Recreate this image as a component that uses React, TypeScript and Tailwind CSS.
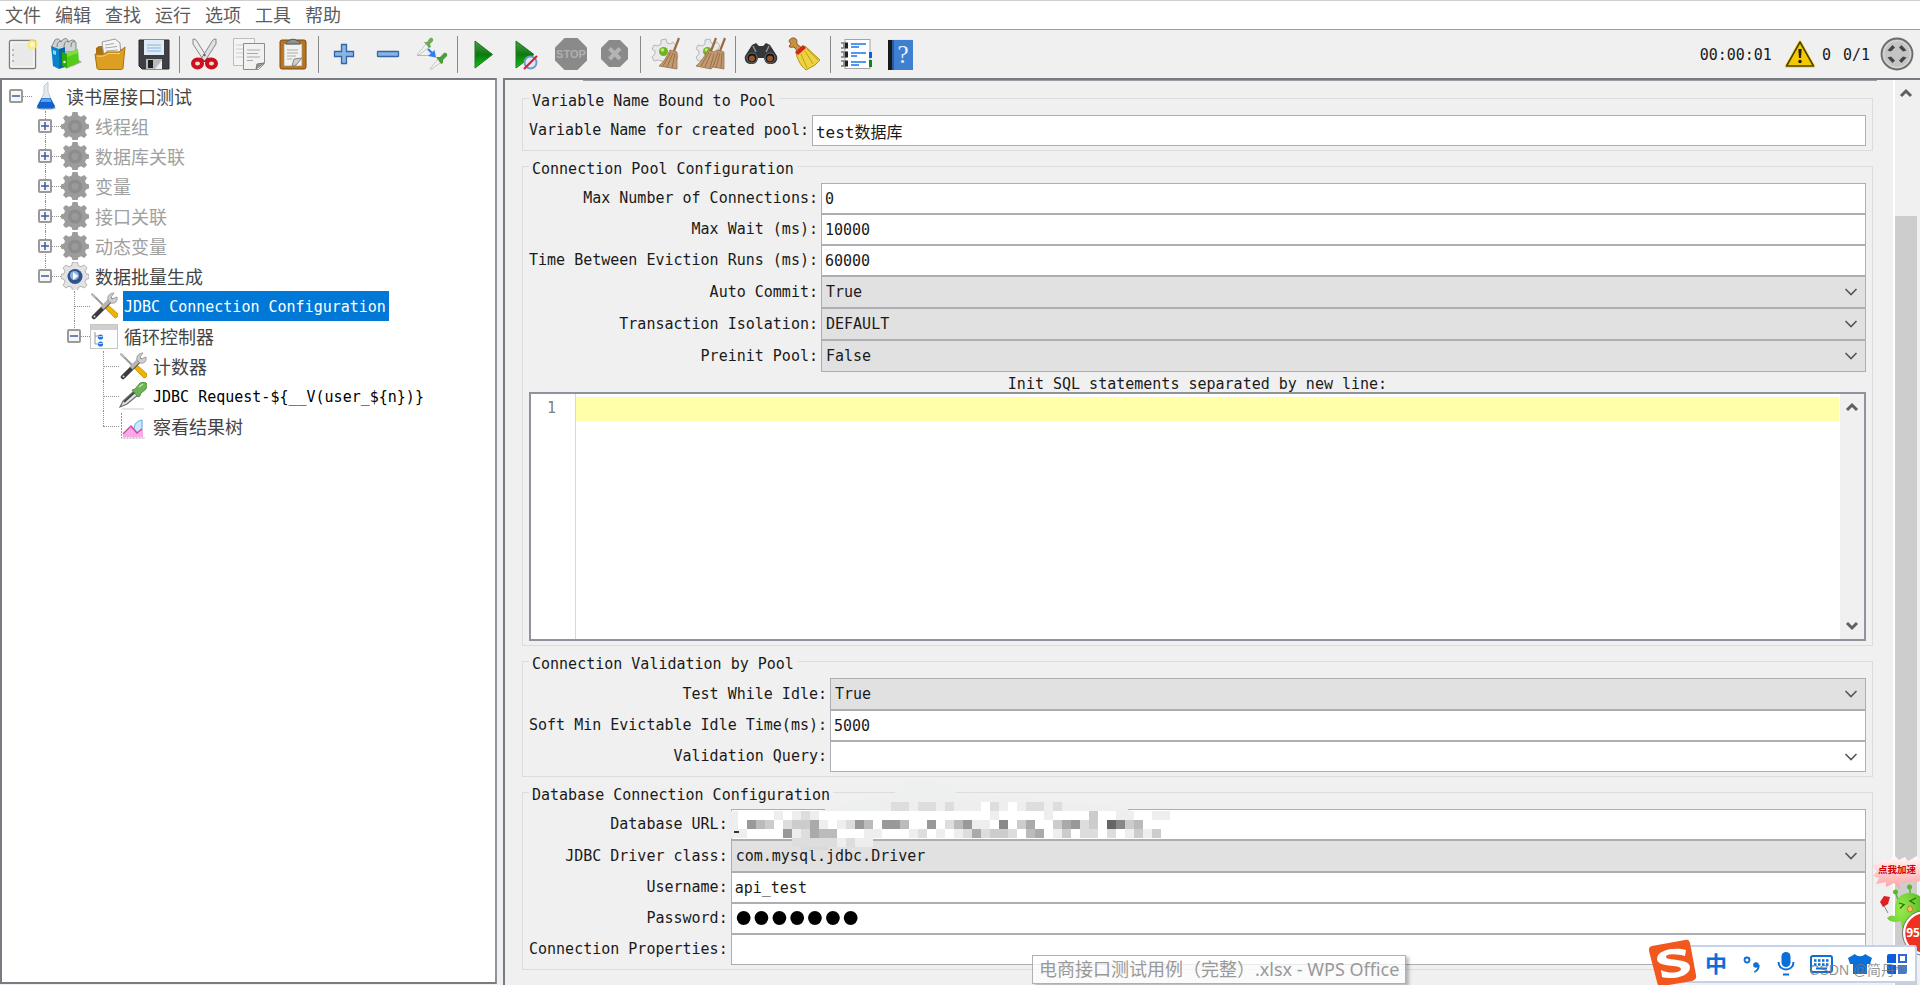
import React, { useState } from 'react';
import clsx from 'clsx';

type IconProps = { className?: string };
type IconType = React.FC<IconProps>;

/* ---------- Toolbar icons ---------- */

const NewIcon: IconType = () => (
  <svg width="34" height="34" viewBox="0 0 34 34">
    <rect x="4.5" y="3.5" width="26" height="28" rx="1.5" fill="#e9e9e9" stroke="#7d7d7d" strokeWidth="1.4" />
    <rect x="6" y="5" width="23" height="25" fill="none" stroke="#fff" />
    <path d="M7 13h2M7 18h2M7 24h2" stroke="#888" />
    <circle cx="27.5" cy="7.500" r="5" fill="#fbe96a" opacity=".8" />
    <circle cx="27.5" cy="7.500" r="2.5" fill="#fff8c0" />
  </svg>
);

const TemplatesIcon: IconType = () => (
  <svg width="34" height="34" viewBox="0 0 34 34">
    <path d="M22 30l11-5-5-3z" fill="#555" opacity=".5" />
    <path d="M3 9l3-6c3-2 5-1 5 2l4-3c3-1 4 0 4 3l4-2c3 0 4 2 4 4v8H5z" fill="#cfd3d3" stroke="#7d8686" />
    <path d="M8 10c0-5 3-7 5-5M15 10c0-5 3-7 5-5M22 10c0-5 2-6 4-5" fill="none" stroke="#6f8080" />
    <path d="M2 9l8 3v20l-6-3z" fill="#0a83c8" />
    <path d="M10 12l6-2v20l-6 2z" fill="#0567a8" />
    <path d="M4 13l3 1v4l-3-1z" fill="#8fd3f8" />
    <path d="M13 15l5 1.500v15l-5-3z" fill="#2ea70a" />
    <path d="M18 16.500L29 12l1 13-12 6.500z" fill="#53cc17" />
    <path d="M18 16.500L29 12v4l-11 4z" fill="#7be03c" />
    <circle cx="15.500" cy="25" r="1.300" fill="#d8ffc5" />
  </svg>
);

const OpenIcon: IconType = () => (
  <svg width="34" height="34" viewBox="0 0 34 34">
    <path d="M3 11l3-2h5l2 3h17v17H3z" fill="#a8730f" />
    <path d="M9 5l13-3 5 4 1 14H11z" fill="#f5f5f5" stroke="#9a9a9a" />
    <path d="M12 8l9-1.500M12 11l12-1.500M13 14l12-1" stroke="#a8a8a8" />
    <path d="M2 17c8 1 9 0 12-2h12l6-5-2 21c0 1-1 1.500-2 1.500H6c-1 0-2-.5-2-1.500z" fill="#dd9f22" stroke="#a8730f" />
    <path d="M4 19c7 1 9-1 11-2.500h12" fill="none" stroke="#f8d377" />
  </svg>
);

const SaveIcon: IconType = () => (
  <svg width="34" height="34" viewBox="0 0 34 34">
    <path d="M2 3h30v29H5l-3-3z" fill="#3d3f42" stroke="#26282a" />
    <rect x="7" y="3" width="20" height="15" fill="#dfecf8" />
    <path d="M10 8h14M10 11h14M10 14h14" stroke="#8ab2da" />
    <rect x="9" y="22" width="16" height="10" fill="#b8babc" />
    <rect x="11" y="23" width="5" height="8" fill="#222" />
    <path d="M18 32l7-9v9z" fill="#ededed" />
  </svg>
);

const CutIcon: IconType = () => (
  <svg width="34" height="34" viewBox="0 0 34 34">
    <path d="M5 2c3 0 4 2 5 4l10 16-4 2L5 7z" fill="#ececec" stroke="#868686" />
    <path d="M28 2c-3 0-4 2-5 4L13 22l4 2L28 7z" fill="#e0e0e0" stroke="#868686" />
    <circle cx="16.5" cy="18" r="1.200" fill="#666" />
    <path d="M10 21c3-1 5 0 6.500 3 1.500-3 3.500-4 6.500-3l-2 4h-9z" fill="#cc0f18" />
    <ellipse cx="9.500" cy="26.500" rx="4.500" ry="4" fill="#f6d9da" stroke="#cc0f18" strokeWidth="4" />
    <ellipse cx="23.500" cy="26.500" rx="4.500" ry="4" fill="#f6d9da" stroke="#cc0f18" strokeWidth="4" />
  </svg>
);

const CopyIcon: IconType = () => (
  <svg width="34" height="34" viewBox="0 0 34 34">
    <path d="M1.500 1.500h21v27h-21z" fill="#f4f4f4" stroke="#bdbdbd" />
    <path d="M4 8h12M4 12h8M4 16h8M4 20h8" stroke="#ccc" />
    <path d="M11.500 6.500h21v20l-6 6h-15z" fill="#f1f1f1" stroke="#8c8c8c" />
    <path d="M15 13h13M15 16.500h11M15 20h13M15 23.500h6" stroke="#a8a8a8" />
    <path d="M32 26l-7 1-1 5z" fill="#9b9b9b" stroke="#777" />
  </svg>
);

const PasteIcon: IconType = () => (
  <svg width="34" height="34" viewBox="0 0 34 34">
    <rect x="4" y="3" width="26" height="29" rx="2" fill="#b9741c" stroke="#7d4b0d" />
    <path d="M8 7h18v22H8z" fill="#f2f2f0" stroke="#999" strokeWidth=".7" />
    <path d="M10 7c0-3 3-3 4-4s5-1 6 0 4 1 4 4z" fill="#8e938c" stroke="#555951" />
    <path d="M11 13h11M11 16h11M11 19h9M11 22h5" stroke="#aaa" />
    <path d="M26 21l-8 1-2 7 4-1z" fill="#cfcfcf" stroke="#888" />
  </svg>
);

const PlusIcon: IconType = () => (
  <svg width="34" height="34" viewBox="0 0 34 34">
    <path d="M14.500 7.500h5v7h7v5h-7v7h-5v-7h-7v-5h7z" fill="#88b5e4" stroke="#3465a4" strokeWidth="1.300" />
  </svg>
);

const MinusIcon: IconType = () => (
  <svg width="34" height="34" viewBox="0 0 34 34">
    <rect x="6.500" y="14.500" width="21" height="5" rx=".5" fill="#88b5e4" stroke="#3465a4" strokeWidth="1.300" />
  </svg>
);

const ToggleIcon: IconType = () => (
  <svg width="34" height="34" viewBox="0 0 34 34">
    <path d="M2 18L11 7l3 3L4 18z" fill="#f4f4f4" stroke="#b5bdb0" strokeWidth=".8" />
    <path d="M2 18.500h15" stroke="#b9b9b9" />
    <path d="M9 5l3 0 3-4c2-1 4 1 3 3l-3 3 1 3-2 1z" fill="#70a85c" />
    <path d="M15 32l8-10 3 3-9 7z" fill="#f4f4f4" stroke="#b5bdb0" strokeWidth=".8" />
    <path d="M21 20l4 0 4-4c2-1 4 1 3 3l-4 4 0 3-2 1z" fill="#4f9c3c" />
    <path d="M13 12l5 5" stroke="#2f7fe8" strokeWidth="2.200" />
    <path d="M21 20.500l-8-1.500 6.500-6z" fill="#2f7fe8" />
  </svg>
);

const StartIcon: IconType = () => (
  <svg width="34" height="34" viewBox="0 0 34 34">
    <defs>
      <linearGradient id="start-green" x1="0" y1="0" x2="0" y2="1">
        <stop offset="0" stopColor="#4c9b4a" />
        <stop offset=".5" stopColor="#0d7a0f" />
        <stop offset="1" stopColor="#12c414" />
      </linearGradient>
    </defs>
    <path d="M9 4l17.500 13.500L9 31z" fill="url(#start-green)" stroke="#1c7a1e" />
  </svg>
);

const StartNoTimersIcon: IconType = () => (
  <svg width="34" height="34" viewBox="0 0 34 34">
    <path d="M6 4l18 13.500L6 31z" fill="url(#start-green)" stroke="#1c7a1e" />
    <circle cx="20.500" cy="25.500" r="6" fill="#dce9f8" stroke="#6f9ccd" strokeWidth="2" />
    <path d="M14 32l13-13" stroke="#d8202a" strokeWidth="2.200" />
  </svg>
);

const StopIcon: IconType = () => (
  <svg width="34" height="34" viewBox="0 0 34 34">
    <path d="M10.500 1h13L33 10.500v13L23.500 33h-13L1 23.500v-13z" fill="#8a8a8a" />
    <text x="17" y="21" textAnchor="middle" fontSize="11" fontWeight="700" fill="#b0b0b0" fontFamily="Liberation Sans, sans-serif">
      STOP
    </text>
  </svg>
);

const ShutdownIcon: IconType = () => (
  <svg width="34" height="34" viewBox="0 0 34 34">
    <path d="M11 3h11l8 8v11l-8 8H11l-8-8V11z" fill="#8a8a8a" />
    <path d="M11.500 11.500l10.500 10.500M22 11.500L11.500 22" stroke="#b4b4b4" strokeWidth="4" />
  </svg>
);

const GearBody = () => (
  <>
    <path
      d="M12 3l5-1 1 4 3 1 3-2 3 4-2 3v4l4 2-1 5-5 1-3 3-5 1-2-4-4-1-4 1-2-4 3-3v-3L3 12l2-4 4 1 3-2z"
      fill="#e9e9e9"
      stroke="#b7b7b7"
    />
    <circle cx="14.500" cy="14.500" r="4.500" fill="#6fb41f" />
    <circle cx="13.500" cy="13" r="1.800" fill="#bfe58b" />
  </>
);

const ClearIcon: IconType = () => (
  <svg width="34" height="34" viewBox="0 0 34 34">
    <GearBody />
    <path d="M30 1l-5 13" stroke="#9a6b42" strokeWidth="2.200" />
    <path d="M21 13l7 2 0 17-18-3c5-4 8-10 11-16z" fill="#c39a6f" stroke="#8c6540" strokeWidth=".7" />
    <path d="M22 15l-8 14M24 16l-6 14M26 16l-3 15" stroke="#8c6540" strokeWidth=".8" />
  </svg>
);

const ClearAllIcon: IconType = () => (
  <svg width="34" height="34" viewBox="0 0 34 34">
    <GearBody />
    <path d="M23 1l-5 13M32 1l-5 13" stroke="#9a6b42" strokeWidth="2.200" />
    <path d="M15 13l6 2 3-2 7 2v17l-11-2-2 2-15-3c5-4 9-10 12-16z" fill="#c39a6f" stroke="#8c6540" strokeWidth=".7" />
    <path d="M16 15L8 29M18 16l-6 14M21 17l-4 14M25 15l-5 15M27 16l-4 15M29 16l-1 15" stroke="#8c6540" strokeWidth=".8" />
  </svg>
);

const SearchIcon: IconType = () => (
  <svg width="34" height="34" viewBox="0 0 34 34">
    <path d="M8 8l4-2 3 3h4l3-3 4 2 7 11c1 4-1 8-6 8s-6-2-7-6h-6c-1 4-2 6-7 6s-7-4-6-8z" fill="#34373a" />
    <path d="M9 9l3 6M25 9l-3 6" stroke="#8d9296" strokeWidth="1.500" />
    <circle cx="8" cy="21" r="5" fill="#111" stroke="#6e7173" />
    <circle cx="26" cy="21" r="5" fill="#111" stroke="#6e7173" />
    <circle cx="8" cy="21.500" r="3" fill="#9a5423" />
    <circle cx="26" cy="21.500" r="3" fill="#9a5423" />
  </svg>
);

const ResetSearchIcon: IconType = () => (
  <svg width="34" height="34" viewBox="0 0 34 34">
    <path d="M1 4c1-3 5-4 7-2s0 4 1 5l6 5-4 4-5-6c-2 0-5 1-5-1l2-2z" fill="#c98f45" stroke="#8a5a1c" />
    <path d="M8 16l9-7 15 14-5 5-9 5c-5-4-8-9-10-17z" fill="#ecd33f" stroke="#b29312" />
    <path d="M13 17l6 14M17 14l8 13M19 12l11 11" stroke="#b29312" strokeWidth=".8" />
    <path d="M7 15l8-7 3 3-8 7z" fill="#d4251b" />
  </svg>
);

const FunctionIcon: IconType = () => (
  <svg width="34" height="34" viewBox="0 0 34 34">
    <rect x="6" y="2.500" width="25" height="29" fill="#fff" stroke="#a4a4a4" />
    <path d="M30 15h3v6h-3z" fill="#0b63dc" />
    <path d="M30 23h3v7h-3z" fill="#0d8a16" />
    <path d="M12 7h15M12 10h8M12 16h15M12 19h6M12 25h15M12 28h8" stroke="#1a76ec" strokeWidth="1.500" />
    <path d="M2 6h3v5H2M2 15h3v5H2M2 24h3v5H2" fill="none" stroke="#777" strokeWidth="1.500" />
    <path d="M6 5.500h3v6H6zM6 14.500h3v6H6zM6 23.500h3v6H6z" fill="#222" />
  </svg>
);

const HelpIcon: IconType = () => (
  <svg width="34" height="34" viewBox="0 0 34 34">
    <path d="M5 3h25v30H5z" fill="#3f7fd0" />
    <path d="M5 3h4v30H5z" fill="#17191c" />
    <path d="M9 3h2v30H9z" fill="#2a5c9f" />
    <path d="M6 2.500h24" stroke="#dfe7ef" />
    <text x="20" y="26" textAnchor="middle" fontSize="25" fill="#e6f1ff" fontFamily="Liberation Serif, serif">
      ?
    </text>
  </svg>
);

const WarningIcon: IconType = () => (
  <svg width="32" height="30" viewBox="0 0 32 30">
    <path d="M16 2.500L30 27.500H2z" fill="#f5c800" stroke="#f7e06a" strokeWidth="3" strokeLinejoin="round" />
    <path d="M16 3L29.500 27h-27z" fill="#f5c800" stroke="#4d4300" strokeWidth="1.600" strokeLinejoin="round" />
    <path d="M14.300 10h3.400l-.7 9h-2z" fill="#222" />
    <circle cx="16" cy="22.500" r="1.800" fill="#222" />
  </svg>
);

const RemoteStatusIcon: IconType = () => (
  <svg width="34" height="34" viewBox="0 0 34 34">
    <circle cx="17" cy="17" r="15.500" fill="#b9b9b9" stroke="#6c6c6c" strokeWidth="1.800" />
    <circle cx="17" cy="17" r="13.500" fill="#c4c4c4" stroke="#dedede" />
    <path d="M7.500 13.500l5-5.500 2.500 2.500-4 4zM26.500 13.500l-5-5.500-2.500 2.500 4 4zM7.500 20.500l5 5.500 2.500-2.500-4-4zM26.500 20.500l-5 5.500-2.500-2.500 4-4z" fill="#454545" />
  </svg>
);

/* ---------- Tree icons ---------- */

const FlaskIcon: IconType = () => (
  <svg width="28" height="28" viewBox="0 0 28 28">
    <ellipse cx="14" cy="26" rx="10" ry="1.800" fill="#bbb" />
    <path d="M12 4l4-4v10l6 14c0 2-1 2-2 2H8c-2 0-2-1-2-2l6-13z" fill="#e4e9f0" stroke="#b5bcc6" strokeWidth=".8" />
    <path d="M9.500 16h9l4.500 8c0 2-2 2.500-3 2.500H8c-1 0-3-.5-3-2.500z" fill="#0d63cf" />
    <path d="M10 16.500h8l1.500 3.500H8.500z" fill="#5aa2ee" />
  </svg>
);

const gearPath =
  'M11.500 0h5l.8 3.600 2.700 1.100L23.200 3 26 5.900l-2 3 1 2.700 3 .9v4l-3 .9-1 2.700 2 3-2.800 2.900-3.200-1.700-2.700 1.100-.8 3.100h-5l-.8-3.100L8 24.300 4.800 26 2 23.100l2-3-1-2.700-3-.9v-4l3-.9 1-2.700-2-3L4.800 3 8 4.700l2.700-1.100z';

const DisabledGearIcon: IconType = () => (
  <svg width="28" height="28" viewBox="0 0 28 28">
    <path d={gearPath} fill="#9c9c9c" />
    <circle cx="14" cy="14.500" r="7" fill="#8d8d8d" />
    <circle cx="14" cy="14.500" r="3.500" fill="#9a9a9a" />
  </svg>
);

const GearIcon: IconType = () => (
  <svg width="28" height="28" viewBox="0 0 28 28">
    <path d={gearPath} fill="#e3e3e3" stroke="#a3a3a3" strokeWidth=".8" />
    <circle cx="14" cy="14.500" r="7.500" fill="#31538c" />
    <circle cx="13.500" cy="13.500" r="4.500" fill="#8fb1e0" />
    <path d="M12 10l5 4-5 4z" fill="#fff" />
  </svg>
);

const ToolsIcon: IconType = () => (
  <svg width="28" height="28" viewBox="0 0 28 28">
    <path d="M2 2l14 14" stroke="#9a9a9a" strokeWidth="2" />
    <path d="M1 1l3 1 2 3-2 1-3-3z" fill="#bdbdbd" />
    <path d="M15 16l3-3 10 9c0 3-2 4-3 4z" fill="#f0b400" stroke="#c48a00" strokeWidth=".8" />
    <path d="M4 25L21 8" stroke="#3b3b3b" strokeWidth="4.500" strokeLinecap="round" />
    <path d="M12 16l9-9" stroke="#b5b5b5" strokeWidth="4" />
    <path d="M18 8c-1-4 2-7 6-7l-3 4 1 2 5-2c1 4-2 7-6 6z" fill="#cfcfcf" stroke="#8c8c8c" strokeWidth=".8" />
    <circle cx="4.500" cy="24.500" r="1" fill="#ddd" />
  </svg>
);

const LoopIcon: IconType = () => (
  <svg width="28" height="28" viewBox="0 0 28 28">
    <rect x=".5" y="2.500" width="27" height="24" fill="#fcfcfc" stroke="#c5c5c5" />
    <path d="M1 3h26v5H1z" fill="#cfcfcf" />
    <path d="M5 10v12h4M5 14h4" fill="none" stroke="#999" />
    <circle cx="10.500" cy="15" r="2.600" fill="#2077dd" />
    <circle cx="10.500" cy="22" r="2.600" fill="#2077dd" />
    <path d="M8.500 14.500h4M8.500 21.500h4" stroke="#b9dcff" />
  </svg>
);

const SamplerIcon: IconType = () => (
  <svg width="28" height="28" viewBox="0 0 28 28">
    <path d="M3 27h22" stroke="#ddd" strokeWidth="1.500" />
    <path d="M1 25l3-6 11-10 4 4L8 22z" fill="#dfe3e3" stroke="#6a6e6e" strokeWidth="1.200" />
    <path d="M5 20L16 10" stroke="#444" strokeWidth="1.800" />
    <path d="M13 8l3-1 5-6c3-1 6-1 7 1s0 4-2 6l-4 3-1 3-2 1z" fill="#6db455" stroke="#47823a" strokeWidth=".8" />
    <path d="M20 5l4-3" stroke="#c2eab0" strokeWidth="1.500" />
  </svg>
);

const ListenerIcon: IconType = () => (
  <svg width="28" height="28" viewBox="0 0 28 28">
    <path d="M2.500 1v25H26" fill="none" stroke="#999" strokeDasharray="2 1" />
    <path d="M15 17c0-5 3-8 8-9v14l-8 3z" fill="#cfe6fb" stroke="#55a5f0" />
    <path d="M4 23l5-5 4-4 4 5 3 2 4-4v8H4z" fill="#f9a8e8" />
    <path d="M4 22l8-8 6 7 5-4" fill="none" stroke="#d64596" strokeWidth="1.500" />
  </svg>
);

/* ---------- Small shared pieces ---------- */

const Chevron = ({ up = false }: { up?: boolean }) => (
  <svg width="14" height="10" viewBox="0 0 14 10" className={clsx(up && 'rotate-180')}>
    <path d="M2 2l5 5 5-5" fill="none" stroke="#606060" strokeWidth="3" />
  </svg>
);

const ThinChevron = () => (
  <svg width="14" height="10" viewBox="0 0 14 10">
    <path d="M1.500 2l5.500 5.500L12.500 2" fill="none" stroke="#555" strokeWidth="1.600" />
  </svg>
);

const toolbarGroups: { name: string; icon: IconType }[][] = [
  [
    { name: 'New', icon: NewIcon },
    { name: 'Templates', icon: TemplatesIcon },
    { name: 'Open', icon: OpenIcon },
    { name: 'Save', icon: SaveIcon },
  ],
  [
    { name: 'Cut', icon: CutIcon },
    { name: 'Copy', icon: CopyIcon },
    { name: 'Paste', icon: PasteIcon },
  ],
  [
    { name: 'Expand All', icon: PlusIcon },
    { name: 'Collapse All', icon: MinusIcon },
    { name: 'Toggle', icon: ToggleIcon },
  ],
  [
    { name: 'Start', icon: StartIcon },
    { name: 'Start no pauses', icon: StartNoTimersIcon },
    { name: 'Stop', icon: StopIcon },
    { name: 'Shutdown', icon: ShutdownIcon },
  ],
  [
    { name: 'Clear', icon: ClearIcon },
    { name: 'Clear All', icon: ClearAllIcon },
  ],
  [
    { name: 'Search', icon: SearchIcon },
    { name: 'Reset Search', icon: ResetSearchIcon },
  ],
  [
    { name: 'Function Helper', icon: FunctionIcon },
    { name: 'Help', icon: HelpIcon },
  ],
];

const menus = ['文件', '编辑', '查找', '运行', '选项', '工具', '帮助'];

const MenuBar = () => (
  <nav className="flex h-[30px] items-center gap-[14px] border-t border-b border-t-[#cfcfcf] border-b-[#a0a0a0] bg-white pb-[3px] pl-[5px] font-['Noto_Sans_CJK_SC',sans-serif] text-lg leading-none text-[#5c5c5c]">
    {menus.map((menu) => (
      <button key={menu} type="button">
        {menu}
      </button>
    ))}
  </nav>
);

const Toolbar = () => (
  <div className="flex h-12 items-center">
    {toolbarGroups.map((group, i) => (
      <React.Fragment key={i}>
        {i > 0 && (
          <div className="flex w-[7px] justify-center">
            <div className="h-[37px] w-px bg-[#8a8a8a]" />
          </div>
        )}
        {group.map(({ name, icon: Icon }) => (
          <button key={name} type="button" aria-label={name} className="flex w-11 justify-center">
            <Icon />
          </button>
        ))}
      </React.Fragment>
    ))}
    <div className="ml-auto flex items-center pr-[6px]">
      <span className="pt-[2px]">00:00:01</span>
      <button type="button" aria-label="Log errors" className="mr-[6px] ml-3">
        <WarningIcon />
      </button>
      <span className="mr-3 pt-[2px]">0</span>
      <span className="mr-[10px] pt-[2px]">0/1</span>
      <RemoteStatusIcon />
    </div>
  </div>
);

/* ---------- Test plan tree ---------- */

interface TreeItem {
  label: string;
  depth: number;
  icon: IconType;
  toggle?: 'plus' | 'minus';
  last?: boolean;
  disabled?: boolean;
}

const treeItems: TreeItem[] = [
  { label: '读书屋接口测试', depth: 0, icon: FlaskIcon, toggle: 'minus' },
  { label: '线程组', depth: 1, icon: DisabledGearIcon, toggle: 'plus', disabled: true },
  { label: '数据库关联', depth: 1, icon: DisabledGearIcon, toggle: 'plus', disabled: true },
  { label: '变量', depth: 1, icon: DisabledGearIcon, toggle: 'plus', disabled: true },
  { label: '接口关联', depth: 1, icon: DisabledGearIcon, toggle: 'plus', disabled: true },
  { label: '动态变量', depth: 1, icon: DisabledGearIcon, toggle: 'plus', disabled: true },
  { label: '数据批量生成', depth: 1, icon: GearIcon, toggle: 'minus', last: true },
  { label: 'JDBC Connection Configuration', depth: 2, icon: ToolsIcon },
  { label: '循环控制器', depth: 2, icon: LoopIcon, toggle: 'minus', last: true },
  { label: '计数器', depth: 3, icon: ToolsIcon },
  { label: 'JDBC Request-${__V(user_${n})}', depth: 3, icon: SamplerIcon },
  { label: '察看结果树', depth: 3, icon: ListenerIcon, last: true },
];

const TreeRow = ({ item, selected, onSelect }: { item: TreeItem; selected: boolean; onSelect: () => void }) => {
  const { label, depth, icon: Icon, toggle, last, disabled } = item;
  const latin = /^[\x20-\x7e]+$/.test(label);

  return (
    <li className="flex h-[30px] items-center">
      {Array.from({ length: depth }, (_, i) => (
        <span key={i} className="w-[29px]" />
      ))}
      <span className="relative flex h-full w-[29px] items-center pl-[6px]">
        {depth > 0 && (
          <span
            className={clsx('absolute top-0 left-[13px] border-l border-dotted border-[#8f8f8f]', last ? 'h-1/2' : 'h-full')}
          />
        )}
        <span className="absolute top-1/2 right-0 left-[13px] border-t border-dotted border-[#8f8f8f]" />
        {toggle && (
          <button
            type="button"
            aria-label={toggle === 'plus' ? 'Expand' : 'Collapse'}
            className="relative flex size-[14px] items-center justify-center rounded-[2px] border-2 border-[#9a9a9a] bg-[#f6f6f6]"
          >
            <svg width="8" height="8" viewBox="0 0 8 8">
              <path d={toggle === 'plus' ? 'M0 4h8M4 0v8' : 'M0 4h8'} stroke="#3b5ba5" strokeWidth="1.500" />
            </svg>
          </button>
        )}
      </span>
      <Icon />
      <button
        type="button"
        onClick={onSelect}
        className={clsx(
          'ml-[5px] flex h-full items-center pl-px whitespace-nowrap',
          latin ? 'pt-[2px] pr-[3px] text-[15px]' : "pb-px font-['Noto_Sans_CJK_SC',sans-serif] text-lg leading-none",
          selected ? 'bg-[#0078d7] text-white' : disabled ? 'text-[#a0a0a0]' : latin ? 'text-black' : 'text-[#444]',
        )}
      >
        {label}
      </button>
    </li>
  );
};

const TestPlanTree = () => {
  const [selected, setSelected] = useState('JDBC Connection Configuration');

  return (
    <aside className="mb-px w-[497px] shrink-0 border-2 border-[#777b82] border-r-[#8f939b] bg-white pt-px pl-px">
      <ul>
        {treeItems.map((item) => (
          <TreeRow
            key={item.label}
            item={item}
            selected={selected === item.label}
            onSelect={() => setSelected(item.label)}
          />
        ))}
      </ul>
    </aside>
  );
};

/* ---------- Form ---------- */

const Section = ({ title, children }: { title: string; children: React.ReactNode }) => (
  <fieldset className="mb-[2px] border border-[#dcdcdc] px-[6px] pb-1">
    <legend className="px-[3px] pt-[6px] leading-5">{title}</legend>
    <div className="pt-1">{children}</div>
  </fieldset>
);

const FormGrid = ({ children }: { children: React.ReactNode }) => (
  <div className="grid grid-cols-[auto_1fr] items-center">{children}</div>
);

interface FieldProps {
  id: string;
  label: string;
  value?: string;
  type?: string;
  className?: string;
}

const FieldLabel = ({ id, label }: { id: string; label: string }) => (
  <label htmlFor={id} className="pr-[3px] text-right whitespace-nowrap">
    {label}
  </label>
);

const TextField = ({ id, label, value = '', type = 'text', className }: FieldProps) => (
  <>
    <FieldLabel id={id} label={label} />
    <input
      id={id}
      type={type}
      defaultValue={value}
      className={clsx('h-[31px] w-full min-w-0 border border-[#adadb5] bg-white pl-[3px] outline-none', className)}
    />
  </>
);

const SelectField = ({ id, label, value }: FieldProps) => (
  <>
    <FieldLabel id={id} label={label} />
    <div className="relative flex h-8 items-center">
      <select
        id={id}
        defaultValue={value}
        className="size-full appearance-none border border-[#adadb5] bg-[#e1e1e1] pl-1 outline-none"
      >
        <option>{value}</option>
      </select>
      <span className="pointer-events-none absolute right-2">
        <ThinChevron />
      </span>
    </div>
  </>
);

const ComboField = ({ id, label }: FieldProps) => (
  <>
    <FieldLabel id={id} label={label} />
    <div className="flex h-[31px] items-center border border-[#adadb5] bg-white pr-[7px]">
      <input id={id} type="text" className="h-full min-w-0 flex-1 pl-[3px] outline-none" />
      <button type="button" aria-label="Show options">
        <ThinChevron />
      </button>
    </div>
  </>
);

// Grey level of each 9px block, one hex digit per block; a dot leaves the block clear
const mosaicRows = [
  '.................eddeddedeeefdefeddede............',
  'effffefedefffffffffffffffffffefffffeffffcffeeffee.',
  'ef9bcfdccaefed9bf99bff9fdb9eef8fcaffca9dcf68cbfff.',
  'eeffff9edabbfffeefffedfefedadccdfbafecfddfdfececff',
  '.......dddddedee..................................',
];

const MaskedUrl = () => (
  <svg
    width="450"
    height="54"
    viewBox="0 0 450 54"
    className="pointer-events-none absolute bottom-[-16px] left-[-2px] overflow-visible"
    shapeRendering="crispEdges"
  >
    <path d="M90 9L128 -1L150 -6L178 -12L180 -20q8 -8 18 0L222 -14v4L330 0L392 4L402 9z" fill="#eeefef" />
    {mosaicRows.map((row, y) =>
      [...row].map((c, x) =>
        c === '.' ? null : (
          <rect key={`${x}-${y}`} x={x * 9} y={y * 9} width="9" height="9" fill={`#${c}${c}${c}`} />
        ),
      ),
    )}
    <rect x="72" y="45" width="27" height="3" fill="#dadada" />
    <rect x="5" y="29" width="5" height="2" fill="#333" />
  </svg>
);

const SqlEditor = () => (
  <div className="flex h-[249px] border-2 border-[#8f939b] bg-white">
    <div className="w-[45px] border-r border-[#d8d8d8] pt-[2px] pr-[19px] text-right leading-6 text-[#808080]">1</div>
    <div className="flex-1 pt-[3px]">
      <textarea
        id="init-sql"
        rows={1}
        spellCheck={false}
        className="block h-6 w-full resize-none overflow-hidden bg-[#ffffaa] leading-6 outline-none"
      />
    </div>
    <div className="ml-px flex w-6 flex-col items-center justify-between bg-[#f0f0f0] py-2">
      <Chevron up />
      <Chevron />
    </div>
  </div>
);

const ConnectionForm = () => (
  <form className="min-w-0 flex-1 pr-5 pl-[17px]">
    <div className="mr-[-4px] mb-1 ml-[61px] h-px bg-[#9b9da5]" />

    <Section title="Variable Name Bound to Pool">
      <FormGrid>
        <TextField id="pool-name" label="Variable Name for created pool:" value="test数据库" className="text-base" />
      </FormGrid>
    </Section>

    <Section title="Connection Pool Configuration">
      <FormGrid>
        <TextField id="max-connections" label="Max Number of Connections:" value="0" />
        <TextField id="max-wait" label="Max Wait (ms):" value="10000" />
        <TextField id="eviction-runs" label="Time Between Eviction Runs (ms):" value="60000" />
        <SelectField id="auto-commit" label="Auto Commit:" value="True" />
        <SelectField id="isolation" label="Transaction Isolation:" value="DEFAULT" />
        <SelectField id="preinit" label="Preinit Pool:" value="False" />
      </FormGrid>
      <label htmlFor="init-sql" className="block h-5 text-center leading-6">
        Init SQL statements separated by new line:
      </label>
      <SqlEditor />
    </Section>

    <Section title="Connection Validation by Pool">
      <FormGrid>
        <SelectField id="test-idle" label="Test While Idle:" value="True" />
        <TextField id="idle-time" label="Soft Min Evictable Idle Time(ms):" value="5000" />
        <ComboField id="validation-query" label="Validation Query:" />
      </FormGrid>
    </Section>

    <Section title="Database Connection Configuration">
      <FormGrid>
        <FieldLabel id="db-url" label="Database URL:" />
        <div className="relative z-10 h-[31px]">
          <input id="db-url" type="text" className="size-full border border-[#adadb5] bg-white pl-[3px] outline-none" />
          <MaskedUrl />
        </div>
        <SelectField id="driver" label="JDBC Driver class:" value="com.mysql.jdbc.Driver" />
        <TextField id="username" label="Username:" value="api_test" />
        <TextField
          id="password"
          label="Password:"
          value="testapi"
          type="password"
          className="font-['Liberation_Sans',sans-serif] text-[51px] text-black"
        />
        <TextField id="properties" label="Connection Properties:" />
      </FormGrid>
    </Section>
  </form>
);

const PageScrollbar = () => (
  <div className="flex w-6 shrink-0 flex-col items-center border-l-2 border-white bg-[#f0f0f0] pt-2">
    <Chevron up />
    <div className="mt-[118px] w-full flex-1 bg-[#cdcdcd]" />
  </div>
);

/* ---------- Desktop overlays ---------- */

const TaskTooltip = () => (
  <div className="absolute bottom-px left-[1032px] border border-[#b0b0b0] bg-white/75 px-[6px] font-['Noto_Sans','Noto_Sans_CJK_SC',sans-serif] text-lg leading-[27px] whitespace-nowrap text-[#999] shadow-[3px_2px_3px_rgba(0,0,0,0.25)]">
    电商接口测试用例（完整）.xlsx - WPS Office
  </div>
);

const Mascot = () => (
  <div className="absolute right-0 bottom-1 h-[128px] w-[49px] overflow-hidden">
    <svg width="49" height="128" viewBox="0 0 49 128">
      <defs>
        <linearGradient id="burst" x1="0" y1="0" x2="0" y2="1">
          <stop offset="0" stopColor="#fff" />
          <stop offset="1" stopColor="#ff9e9e" />
        </linearGradient>
        <radialGradient id="alien" cx=".4" cy=".3" r=".8">
          <stop offset="0" stopColor="#97ea4c" />
          <stop offset="1" stopColor="#47b517" />
        </radialGradient>
      </defs>
      <path
        d="M2 10l8 1 1-5 7 2 5-6 5 5 6-3 3 4 9-5 4 6v18l-6 3-5-2-6 2-5-1 1 7-6-6-8 4 0-5-10 2 3-6-6-2 4-5-4-4z"
        fill="url(#burst)"
      />
      <path d="M27 47l-2-6M39 42v-8" stroke="#5bb52d" strokeWidth="1.500" />
      <circle cx="24.500" cy="39" r="2.500" fill="#56ba22" />
      <circle cx="38.500" cy="34" r="2.500" fill="#56ba22" />
      <path
        d="M24 60c-1-12 4-20 15-20 5 0 9 2 12 5v50c-12-2-20-12-21-27-5 2-12 1-14-3 3-3 6-3 8-2z"
        fill="url(#alien)"
      />
      <path d="M28 50l5 1.500-4 4M45 45l-6 3 5 3" fill="none" stroke="#2c6c12" strokeWidth="1.300" />
      <ellipse cx="39" cy="56" rx="2.500" ry="3" fill="#f9c06a" stroke="#c98122" />
      <path d="M17 60l-5-9" stroke="#888" />
      <path d="M9 49l4-6 6 1-2 7-5 3z" fill="#e02020" />
      <circle cx="54" cy="80" r="21" fill="#f03020" stroke="#fff" strokeWidth="2.500" />
      <circle cx="54" cy="80" r="22.500" fill="none" stroke="#777" strokeWidth="1" />
      <text x="26" y="20" textAnchor="middle" fontSize="9.500" fontWeight="700" fill="#d00000" fontFamily="Noto Sans CJK SC, sans-serif">
        点我加速
      </text>
      <text x="42" y="84" textAnchor="middle" fontSize="12" fontWeight="700" fill="#fff" fontFamily="Open Sans, sans-serif">
        95
      </text>
    </svg>
  </div>
);

const InputMethodBar = () => (
  <div className="absolute right-[3px] bottom-[2px] flex h-[38px] w-[250px] items-center rounded-[3px] border-2 border-[#c3d2e8] bg-white pl-9">
    <svg width="50" height="48" viewBox="0 0 50 48" className="absolute -top-2 left-[-22px]">
      <path d="M5 7L38 1c3-1 4 0 5 3l6 32c1 3-1 5-4 6l-29 5c-4 1-5 0-6-4L2 12c0-3 0-4 3-5z" fill="#f2571e" />
      <path
        d="M39 11c-9-3-29-1-29 9 0 9 24 5 24 10 0 4-12 5-20 1l1 7c10 3 28 0 28-10 0-9-24-6-24-10 0-4 12-3 19-1z"
        fill="#fff"
      />
    </svg>
    <div className="flex flex-1 items-center justify-between pr-2 text-[#0a6fd8]">
      <button type="button" className="pb-1 font-['Noto_Sans_CJK_SC',sans-serif] text-[22px] leading-none font-bold">
        中
      </button>
      <svg width="20" height="22" viewBox="0 0 20 22">
        <circle cx="5" cy="7" r="2.500" fill="none" stroke="#0a6fd8" strokeWidth="1.800" />
        <circle cx="14" cy="12" r="2.800" fill="#0a6fd8" />
        <path d="M16.800 12c0 4-2 6-4.500 7" fill="none" stroke="#0a6fd8" strokeWidth="1.800" />
      </svg>
      <svg width="18" height="24" viewBox="0 0 18 24">
        <rect x="4.500" y="0" width="9" height="15" rx="4.500" fill="#0a6fd8" />
        <path d="M1.500 10c0 10 15 10 15 0M6 22.500h6" fill="none" stroke="#0a6fd8" strokeWidth="2" />
      </svg>
      <svg width="23" height="20" viewBox="0 0 23 20">
        <rect x="1" y="2" width="21" height="16" rx="2" fill="none" stroke="#0a6fd8" strokeWidth="2" />
        <path d="M4 6.500h15M4 10.500h15" stroke="#0a6fd8" strokeWidth="2.500" strokeDasharray="2.500 1.500" />
        <path d="M6 14.500h11" stroke="#0a6fd8" strokeWidth="2" />
      </svg>
      <svg width="24" height="22" viewBox="0 0 24 22">
        <path d="M7 1c2 3 8 3 10 0l7 4-2 6h-3v10H5V11H2L0 5z" fill="#0a6fd8" />
      </svg>
      <svg width="20" height="20" viewBox="0 0 20 20">
        <path d="M0 2q0-2 2-2h7v9H0zM0 11h9v9H2q-2 0-2-2z" fill="#0a5fe0" />
        <path d="M12 1h7v7h-7z" fill="none" stroke="#2f66dd" strokeWidth="2" />
        <path d="M11 11h9v7q0 2-2 2h-7z" fill="#4a78c4" />
      </svg>
    </div>
    <span className="absolute right-[9px] bottom-px font-['Liberation_Sans','Noto_Sans_CJK_SC',sans-serif] text-sm leading-5 whitespace-nowrap text-[#777]/80">
      CSDN @简丹**
    </span>
  </div>
);

const App = () => (
  <div className="relative flex h-screen flex-col overflow-hidden bg-[#f0f0f0] font-['DejaVu_Sans_Mono','Noto_Sans_CJK_SC',monospace] text-[15px] text-[#1a1a1a]">
    <MenuBar />
    <Toolbar />
    <main className="flex min-h-0 flex-1">
      <TestPlanTree />
      <section className="ml-[6px] flex min-w-0 flex-1 border-t-2 border-l-2 border-[#777b82] pr-[3px]">
        <ConnectionForm />
        <PageScrollbar />
      </section>
    </main>
    <TaskTooltip />
    <Mascot />
    <InputMethodBar />
  </div>
);

export default App;
